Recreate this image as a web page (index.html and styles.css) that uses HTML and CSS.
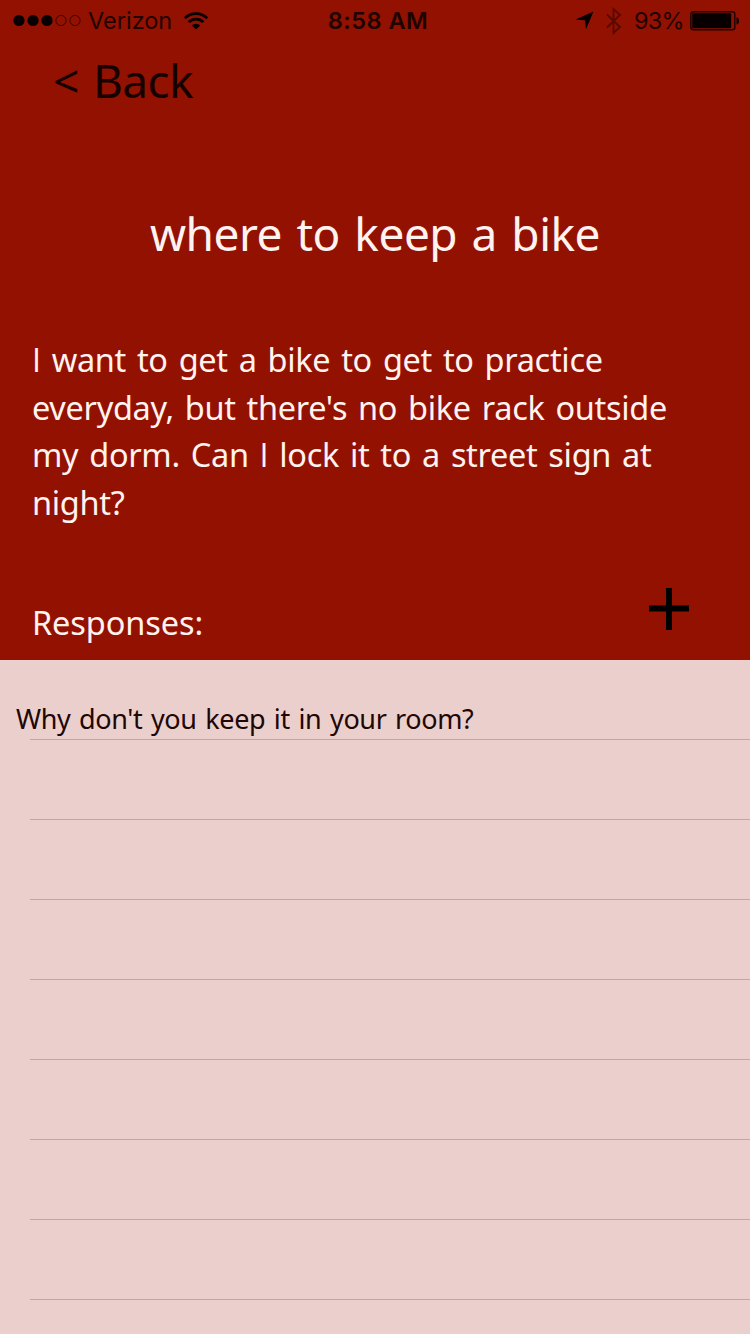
FILE: index.html
```html
<!DOCTYPE html>
<html lang="en">
<head>
  <meta charset="UTF-8" />
  <meta name="viewport" content="width=device-width, initial-scale=1.0" />
  <title>where to keep a bike</title>
  <link rel="stylesheet" href="styles.css">
</head>
<body>
  <header class="status-bar">
    <div class="status-left">
      <svg class="signal" width="69" height="13" viewBox="0 0 69 13">
        <circle cx="6" cy="6.5" r="5.6" />
        <circle cx="20" cy="6.5" r="5.6" />
        <circle cx="34" cy="6.5" r="5.6" />
        <circle class="empty" cx="48" cy="6.5" r="5.1" />
        <circle class="empty" cx="62" cy="6.5" r="5.1" />
      </svg>
      <span class="carrier">Verizon</span>
      <svg class="wifi" width="26" height="20" viewBox="0 0 26 20">
        <path class="arc" d="M1.8 7.2a15.8 15.8 0 0 1 22.4 0" />
        <path class="arc" d="M5.6 11.1a10.5 10.5 0 0 1 14.8 0" />
        <path d="M13 18.6l-4.3-4.1a6.2 6.2 0 0 1 8.6 0z" />
      </svg>
    </div>
    <div class="clock">8:58 AM</div>
    <div class="status-right">
      <svg class="location" width="19" height="19" viewBox="0 0 19 19">
        <path d="M18.5 0.5L11 18.2L10 9.2L0.5 8.5z" />
      </svg>
      <svg class="bluetooth" width="18" height="28" viewBox="0 0 18 28">
        <path d="M2 7.5L15 20L8.5 26V2L15 8L2 20.5" />
      </svg>
      <span class="percent">93%</span>
      <svg class="battery" width="50" height="20" viewBox="0 0 50 20">
        <rect class="shell" x="0.8" y="0.8" width="44" height="18" rx="2.5" />
        <rect x="2.2" y="2.3" width="39" height="15" rx="1" />
        <path d="M46.5 6.5q2.5 0.3 2.5 3.5t-2.5 3.5z" />
      </svg>
    </div>
  </header>

  <nav>
    <a class="back" href="#">&lt; Back</a>
  </nav>

  <section class="question">
    <h1>where to keep a bike</h1>
    <p>
      <span class="plain">I</span> want to get a bike to get to practice<br>
      everyday, but there's no bike rack outside<br>
      my dorm. Can <span class="plain">I</span> lock it to a street sign at<br>
      night?
    </p>
    <div class="responses-bar">
      <h2>Responses:</h2>
      <button class="add" aria-label="Add response">
        <svg width="40" height="42" viewBox="0 0 40 42">
          <path d="M17 0h6v17.5h17v6H23V42h-6V23.5H0v-6h17z" />
        </svg>
      </button>
    </div>
  </section>

  <ul class="responses">
    <li>Why don't you keep it in your room?</li>
    <li></li>
    <li></li>
    <li></li>
    <li></li>
    <li></li>
    <li></li>
    <li></li>
    <li></li>
  </ul>
</body>
</html>
```
FILE: styles.css
```css
* {
  box-sizing: border-box;
}
body {
  margin: 0;
  height: 1334px;
  overflow: hidden;
  font-family: "Noto Sans", sans-serif;
  background: #931100;
  color: #fff3f0;
}
.status-bar {
  display: grid;
  grid-template-columns: 1fr auto 1fr;
  height: 40px;
  padding: 0 10px 0 13px;
  font-family: Inter, sans-serif;
  font-size: 23.5px;
  line-height: 41px;
  color: #1f0300;
}
.status-left,
.status-right {
  display: flex;
  align-items: center;
}
.status-right {
  justify-content: flex-end;
}
.status-bar svg {
  fill: #080000;
}
.signal .empty {
  fill: none;
  stroke: #3a0500;
}
.carrier {
  margin-left: 6px;
}
.wifi {
  margin-left: 11px;
}
.wifi .arc {
  fill: none;
  stroke: #080000;
  stroke-width: 2.7;
}
.clock {
  padding-left: 3px;
  font-weight: 600;
  letter-spacing: 0.5px;
}
.bluetooth {
  margin-left: 11px;
}
.status-bar .bluetooth path {
  fill: none;
  stroke: #580900;
  stroke-width: 1.8;
}
.percent {
  margin: 0 6px 0 11px;
  letter-spacing: -0.7px;
}
.battery .shell {
  fill: none;
  stroke: #180200;
  stroke-width: 1.4;
}
nav {
  height: 162px;
  padding: 10px 0 0 53px;
}
.back {
  font-size: 46px;
  line-height: 60px;
  letter-spacing: -0.6px;
  word-spacing: 3px;
  color: #140100;
  text-decoration: none;
}
.question {
  height: 458px;
}
h1 {
  margin: 0;
  padding-top: 1px;
  font-size: 46px;
  font-weight: 400;
  line-height: 60px;
  letter-spacing: -0.5px;
  word-spacing: 3px;
  text-align: center;
}
.question p {
  margin: 73px 0 0;
  padding-left: 32px;
  font-size: 32.5px;
  line-height: 47.5px;
  letter-spacing: -0.32px;
  word-spacing: 2.8px;
  white-space: nowrap;
}
.plain {
  font-family: "Open Sans", sans-serif;
}
.responses-bar {
  display: flex;
  justify-content: space-between;
  margin-top: 62px;
  padding: 0 61px 0 32px;
}
h2 {
  margin: 11px 0 0;
  font-size: 32.5px;
  font-weight: 400;
  line-height: 48px;
  letter-spacing: -0.1px;
}
.add {
  height: 42px;
  padding: 0;
  border: none;
  background: none;
  cursor: pointer;
}
.add svg {
  display: block;
}
.responses {
  height: 674px;
  margin: 0;
  padding: 0;
  overflow: hidden;
  list-style: none;
  background: #ebcfcc;
}
.responses li {
  height: 80px;
  padding: 39px 0 0 16px;
  font-size: 27px;
  line-height: 40px;
  letter-spacing: -0.38px;
  word-spacing: 2px;
  color: #210604;
  background: linear-gradient(#bea6a3, #bea6a3) 30px 79px / 100% 1px no-repeat;
}
```
